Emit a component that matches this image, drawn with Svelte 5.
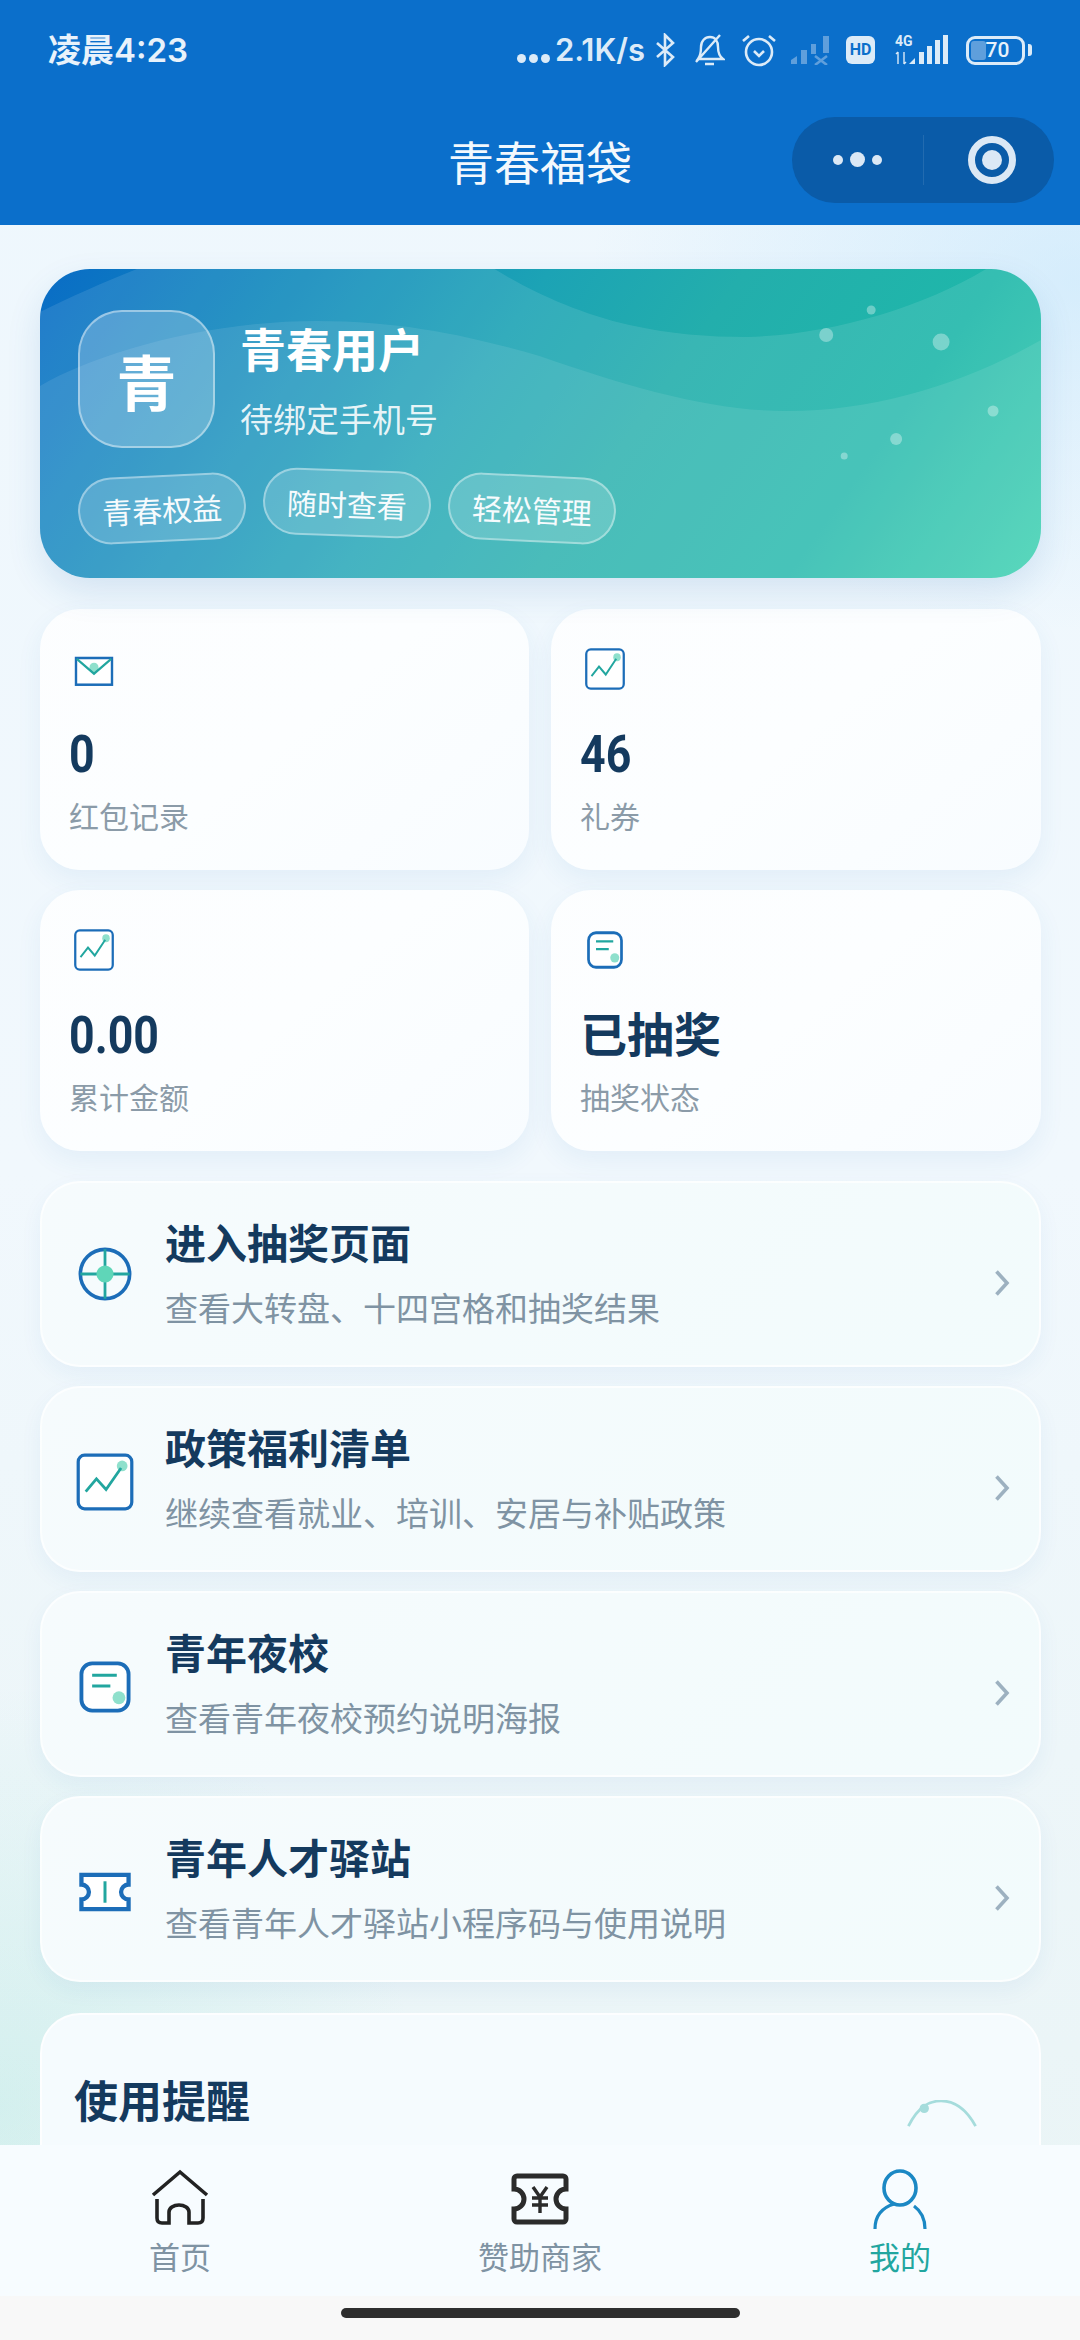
<script>
  const stats = [
    { icon: 'mail', value: '0', label: '红包记录' },
    { icon: 'chart', value: '46', label: '礼券' },
    { icon: 'chart', value: '0.00', label: '累计金额' },
    { icon: 'note', value: '已抽奖', label: '抽奖状态', cjk: true }
  ];
  const menu = [
    { icon: 'wheel', title: '进入抽奖页面', sub: '查看大转盘、十四宫格和抽奖结果' },
    { icon: 'chart', title: '政策福利清单', sub: '继续查看就业、培训、安居与补贴政策' },
    { icon: 'note', title: '青年夜校', sub: '查看青年夜校预约说明海报' },
    { icon: 'ticket', title: '青年人才驿站', sub: '查看青年人才驿站小程序码与使用说明' }
  ];
  const dots = [[787, 66, 7], [832, 41, 4.5], [902, 73, 8.5], [954, 142, 5.5], [857, 170, 6], [805, 187, 3.5]];
</script>

{#snippet glyph(name)}
  {#if name === 'mail'}
    <svg viewBox="0 0 56 56" preserveAspectRatio="none" class="glyph"><rect x="4" y="14" width="48" height="34" fill="#fff" stroke="#1c6db8" stroke-width="3.2"/><circle cx="28" cy="26" r="6" fill="#8fe0cc"/><path d="M5 15 L28 34 L51 15" fill="none" stroke="#22a69f" stroke-width="2.8"/></svg>
  {:else if name === 'chart'}
    <svg viewBox="0 0 56 56" preserveAspectRatio="none" class="glyph"><rect x="3" y="3" width="50" height="50" rx="6" fill="#fff" stroke="#1c6db8" stroke-width="3"/><circle cx="44" cy="13" r="5" fill="#8fe0cc"/><path d="M10 37 L20 25 L29 35 L43 15" fill="none" stroke="#22a69f" stroke-width="2.6"/></svg>
  {:else if name === 'note'}
    <svg viewBox="0 0 56 56" preserveAspectRatio="none" class="glyph"><rect x="6" y="6" width="44" height="44" rx="10" fill="#fff" stroke="#1c6db8" stroke-width="3.6"/><path d="M16 17 H39 M16 27 H33" stroke="#22a69f" stroke-width="2.8"/><circle cx="41" cy="38" r="6" fill="#8fe0cc"/></svg>
  {:else if name === 'wheel'}
    <svg viewBox="0 0 56 56" class="glyph"><circle cx="28" cy="28" r="23" fill="none" stroke="#1c6db8" stroke-width="3.4"/><path d="M28 5 V51 M5 28 H51" stroke="#22a69f" stroke-width="2.6"/><circle cx="28" cy="28" r="8" fill="#5fd6b8"/></svg>
  {:else}
    <svg viewBox="0 0 56 56" class="glyph"><path d="M6 12 H50 V21 A7 7 0 0 0 50 35 V44 H6 V35 A7 7 0 0 0 6 21 Z" fill="#fff" stroke="#1c6db8" stroke-width="4"/><path d="M28 18 V38" stroke="#22a69f" stroke-width="2.8"/></svg>
  {/if}
{/snippet}

<div class="phone">
  <header class="top">
    <div class="status">
      <span class="time">凌晨4:23</span>
      <div class="sys">
        <span class="ell"><i></i><i></i><i></i></span>
        <span class="speed">2.1K/s</span>
        <svg class="s-bt" viewBox="0 0 21 34"><path d="M2 10 L18 24 L10 32 V2 L18 10 L2 24" fill="none" stroke="#dcebf8" stroke-width="2.6"/></svg>
        <svg class="s-bell" viewBox="0 0 32 34"><path d="M5 26 C8 22 8 18 8 14 C8 8 12 4 17 4 C22 4 25 8 25 14 C25 19 26 23 30 26 Z M12 31 H21 M3 29 L27 2" fill="none" stroke="#dcebf8" stroke-width="2.4"/></svg>
        <svg class="s-alarm" viewBox="0 0 36 34"><circle cx="18" cy="19" r="13" fill="none" stroke="#dcebf8" stroke-width="2.6"/><path d="M13 18 L18 23 L23 18 M2 8 L8 3 M28 3 L34 8" fill="none" stroke="#dcebf8" stroke-width="2.6"/></svg>
        <svg class="s-sig" viewBox="0 0 40 30" fill="#5f9fdc"><path d="M0 29 V25 L6 21 V29 Z"/><rect x="10" y="15" width="6" height="14"/><rect x="20" y="9" width="5" height="10"/><rect x="32" y="1" width="6" height="17"/><path d="M24 21 L36 30 M36 21 L24 30" stroke="#5f9fdc" stroke-width="2.6"/></svg>
        <span class="hd">HD</span>
        <svg class="s-4g" viewBox="0 -6 54 42"><text x="0" y="11" class="g4">4G</text><path d="M3 29 V17 M1 19 L3 17 M9 17 V29 M9 29 L11 27" stroke="#dcebf8" stroke-width="1.4" fill="none"/><path d="M14 29 L20 23 V29 Z" fill="#dcebf8"/><rect x="24" y="17" width="5" height="12" fill="#dcebf8"/><rect x="32" y="11" width="5" height="18" fill="#dcebf8"/><rect x="40" y="5" width="5" height="24" fill="#dcebf8"/><rect x="48" y="0" width="5" height="29" fill="#dcebf8"/></svg>
        <div class="batt"><span class="fill"></span><span class="num">70</span></div>
        <span class="tip"></span>
      </div>
    </div>
    <div class="nav">
      <span></span>
      <h1>青春福袋</h1>
      <div class="capsule">
        <span class="more"><i></i><b></b><i></i></span>
        <span class="sep"></span>
        <span class="target"><em></em></span>
      </div>
    </div>
  </header>

  <main class="content">
    <section class="hero">
      <svg class="waves" viewBox="0 0 1002 309" preserveAspectRatio="none">
        <path d="M0 43 C30 28 62 14 97 0 H455 C490 22 540 45 590 56 C630 65 670 68 707 68 C790 66 880 40 947 0 H1002 V309 H0 Z" fill="#fff" fill-opacity=".1"/>
        <path d="M0 117 C55 85 165 52 277 52 C370 52 440 70 500 87 C590 118 670 142 747 142 C840 142 930 112 1002 71 V309 H0 Z" fill="#fff" fill-opacity=".09"/>
        {#each dots as d}
          <circle cx={d[0]} cy={d[1]} r={d[2]} fill="#fff" fill-opacity=".34"/>
        {/each}
      </svg>
      <div class="who">
        <div class="avatar">青</div>
        <div class="info">
          <div class="name">青春用户</div>
          <div class="phoneno">待绑定手机号</div>
        </div>
      </div>
      <div class="tags">
        <span class="tag t1">青春权益</span>
        <span class="tag t2">随时查看</span>
        <span class="tag t3">轻松管理</span>
      </div>
    </section>

    <section class="stats">
      {#each stats as s}
        <div class="stat">
          <div class="stat-icon">{@render glyph(s.icon)}</div>
          <div class="val" class:cjk={s.cjk}>{s.value}</div>
          <div class="lab">{s.label}</div>
        </div>
      {/each}
    </section>

    <section class="menu">
      {#each menu as m}
        <div class="row">
          <div class="row-icon {m.icon}">{@render glyph(m.icon)}</div>
          <div class="row-text">
            <div class="row-title">{m.title}</div>
            <div class="row-sub">{m.sub}</div>
          </div>
          <svg class="chev" viewBox="0 0 16 28"><path d="M2.5 2.5 L13 14 L2.5 25.5" fill="none" stroke="#9db1c0" stroke-width="3.6"/></svg>
        </div>
      {/each}
    </section>

    <section class="tips">
      <h2>使用提醒</h2>
      <svg class="arc" viewBox="0 0 74 30"><path d="M1 28 C12 6 24 1 36 1 C50 1 62 8 73 28" fill="none" stroke="#a5dcdc" stroke-width="3"/><circle cx="18" cy="9" r="5" fill="#a5dcdc"/></svg>
    </section>
  </main>

  <nav class="tabbar">
    <div class="tab">
      <svg viewBox="0 0 60 60" class="ti"><path d="M3 26 L30 3 L57 26" fill="none" stroke="#222" stroke-width="3.6"/><path d="M7 30 V49 q0 5 5 5 H19 V43 a10 7 0 0 1 20 0 V54 H48 q5 0 5 -5 V30" fill="none" stroke="#222" stroke-width="3.6"/></svg>
      <span>首页</span>
    </div>
    <div class="tab">
      <svg viewBox="0 0 60 60" class="ti"><path d="M7 7 H53 a3 3 0 0 1 3 3 V20 a10 10 0 0 0 0 20 V50 a3 3 0 0 1 -3 3 H7 a3 3 0 0 1 -3 -3 V40 a10 10 0 0 0 0 -20 V10 a3 3 0 0 1 3 -3 Z" fill="none" stroke="#2b2b2b" stroke-width="5"/><path d="M23 18 L30 28 L37 18 M22 29 H38 M22 36 H38 M30 28 V44" fill="none" stroke="#2b2b2b" stroke-width="3.4"/></svg>
      <span>赞助商家</span>
    </div>
    <div class="tab on">
      <svg viewBox="0 0 60 60" class="ti"><ellipse cx="30" cy="19" rx="16" ry="17" fill="none" stroke="#1b88c4" stroke-width="3.6"/><path d="M24 35 C11 39 5 48 5 60 M44 37 C51 42 55 50 55 60" fill="none" stroke="#1b88c4" stroke-width="3.2"/></svg>
      <span>我的</span>
    </div>
  </nav>
  <div class="home-bar"><span></span></div>
</div>

<style>
  :global(body) { margin: 0; background: #f8f8f8; }
  .phone {
    position: relative;
    width: 1080px;
    height: 2340px;
    overflow: hidden;
    font-family: Roboto, "Noto Sans CJK SC", sans-serif;
    background:
      radial-gradient(600px 600px at 0% 90%, rgba(120, 220, 205, .2), transparent 70%),
      radial-gradient(700px 500px at 100% 12%, rgba(160, 215, 250, .32), transparent 70%),
      linear-gradient(180deg, #eef7fd 0%, #f1f8fd 50%, #e9f4f5 100%);
  }
  .top { height: 225px; background: #0b6fcb; color: #fff; display: flex; flex-direction: column; }
  .status { height: 100px; display: flex; justify-content: space-between; padding: 0 48px; box-sizing: border-box; }
  .time { font-family: Inter, "Noto Sans CJK SC", sans-serif; font-weight: 600; font-size: 33px; line-height: 100px; color: #e8f2fb; }
  .sys { display: flex; align-items: center; flex: 0 0 auto; color: #dcebf8; }
  .ell { display: flex; gap: 3px; margin-top: 16px; margin-right: 5px; }
  .ell i { width: 9px; height: 9px; border-radius: 50%; background: #dcebf8; display: block; }
  .speed { flex: none; font-family: Inter, sans-serif; font-weight: 600; font-size: 31px; line-height: 44px; white-space: nowrap; }
  .s-bt { width: 21px; height: 34px; margin-left: 10px; }
  .s-bell { width: 32px; height: 34px; margin-left: 17px; }
  .s-alarm { width: 36px; height: 34px; margin-left: 16px; }
  .s-sig { width: 40px; height: 30px; margin-left: 14px; }
  .hd { width: 29px; height: 28px; margin-left: 15px; border-radius: 6px; background: #dcebf8; color: #0b6fcb; font: 700 16px/28px Roboto, sans-serif; text-align: center; }
  .s-4g { width: 54px; height: 42px; margin-left: 20px; }
  .g4 { font: 700 14px Roboto, sans-serif; fill: #dcebf8; }
  .batt { position: relative; width: 59px; height: 29px; margin-left: 17px; border: 3.5px solid #dcebf8; border-radius: 9px; box-sizing: border-box; display: flex; align-items: center; justify-content: center; }
  .fill { position: absolute; left: 2px; top: 2px; bottom: 2px; width: 15px; background: #5f9fdc; border-radius: 3px; }
  .num { position: relative; font: 500 21px Roboto, sans-serif; color: #e8f2fb; margin-left: 4px; }
  .tip { width: 4px; height: 12px; margin-left: 3px; background: #dcebf8; border-radius: 0 3px 3px 0; }

  .nav { flex: 1; display: grid; grid-template-columns: 1fr auto 1fr; align-items: center; padding: 0 26px; margin-top: -6px; }
  h1 { margin: 0; font-size: 46px; font-weight: 400; color: #f2f8fd; }
  .capsule { justify-self: end; width: 262px; height: 86px; border-radius: 43px; background: #0a5ba8; display: flex; align-items: center; }
  .more { width: 131px; display: flex; align-items: center; justify-content: center; gap: 7px; }
  .more i { width: 10px; height: 10px; border-radius: 50%; background: #dbe8f5; }
  .more b { width: 15px; height: 15px; border-radius: 50%; background: #dbe8f5; }
  .sep { width: 1px; height: 50px; background: rgba(255, 255, 255, .1); }
  .target { flex: 1; display: flex; align-items: center; justify-content: center; padding-left: 6px; }
  .target em { width: 48px; height: 48px; box-sizing: border-box; border: 7px solid #dbe8f5; border-radius: 50%; display: flex; align-items: center; justify-content: center; }
  .target em::after { content: ''; width: 20px; height: 20px; border-radius: 50%; background: #dbe8f5; }

  .content { padding: 44px 39px 0 40px; display: flex; flex-direction: column; }
  .hero {
    position: relative;
    height: 309px;
    border-radius: 50px;
    padding: 41px 38px 0;
    box-sizing: border-box;
    overflow: hidden;
    color: #fff;
    background: linear-gradient(125deg, #0a6cc6 0%, #0e86bd 19%, #1ca3b5 42%, #23aeac 58%, #1fb7aa 79%, #36cfae 100%);
    box-shadow: 0 14px 34px rgba(30, 100, 170, .13);
  }
  .waves { position: absolute; inset: 0; width: 100%; height: 100%; }
  .who { position: relative; display: flex; }
  .avatar { width: 137px; height: 138px; box-sizing: border-box; border-radius: 44px; background: rgba(255, 255, 255, .22); border: 2px solid rgba(255, 255, 255, .42); font-size: 60px; font-weight: 700; display: flex; align-items: center; justify-content: center; }
  .info { margin-left: 25px; padding-top: 9px; }
  .name { font-size: 46px; font-weight: 700; line-height: 64px; }
  .phoneno { font-size: 33px; line-height: 46px; margin-top: 15px; color: rgba(255, 255, 255, .88); }
  .tags { position: relative; display: flex; gap: 17px; margin-top: 27px; }
  .tag { width: 168px; height: 67px; box-sizing: border-box; display: flex; align-items: center; justify-content: center; border-radius: 34px; font-size: 30px; background: rgba(255, 255, 255, .16); border: 2px solid rgba(255, 255, 255, .38); color: #f6fbfd; }
  .t1 { transform: rotate(-2.7deg); }
  .t2 { transform: translateY(-5.5px) rotate(2deg); }
  .t3 { transform: rotate(2.7deg); }

  .stats { display: grid; grid-template-columns: 489px 490px; column-gap: 22px; row-gap: 20px; margin-top: 31px; }
  .stat { height: 261px; box-sizing: border-box; padding: 38px 0 0 29px; border-radius: 40px; background: linear-gradient(140deg, rgba(255, 255, 255, .82), #fcfeff 50%, #f8fcff); box-shadow: 0 10px 26px rgba(40, 110, 180, .07); }
  .stat-icon { width: 42px; height: 44px; margin-left: 3.5px; }
  .glyph { display: block; width: 100%; height: 100%; }
  .val { margin-top: 31px; height: 66px; font-size: 52px; font-weight: 700; line-height: 66px; color: #143a5e; transform: scaleX(.86); transform-origin: left center; }
  .val.cjk { font-size: 47px; transform: none; }
  .lab { margin-top: 8px; font-size: 30px; line-height: 44px; color: #8b9ba8; }

  .menu { display: flex; flex-direction: column; gap: 19px; margin-top: 30px; }
  .row { height: 186px; box-sizing: border-box; padding: 0 29px 0 33px; display: flex; align-items: center; border-radius: 40px; background: linear-gradient(135deg, #f6fbfd, #f2fbfc); border: 2px solid rgba(255, 255, 255, .7); box-shadow: 0 8px 22px rgba(40, 110, 180, .06); }
  .row-icon { width: 60px; height: 60px; flex: none; }
  .row-icon.chart, .row-icon.note, .row-icon.ticket { margin-top: 6px; }
  .row-text { flex: 1; margin-left: 30px; }
  .row-title { font-size: 41px; font-weight: 700; line-height: 58px; color: #143a5e; }
  .row-sub { font-size: 33px; line-height: 46px; margin-top: 13px; color: #7f93a3; }
  .chev { width: 16px; height: 28px; flex: none; margin-top: 18px; }

  .tips { position: relative; margin-top: 31px; height: 400px; box-sizing: border-box; padding: 58px 32px; border-radius: 40px; background: #f5fbfe; border: 2px solid rgba(255, 255, 255, .8); }
  h2 { margin: 0; font-size: 44px; font-weight: 700; line-height: 60px; color: #143a5e; }
  .arc { position: absolute; left: 863px; top: 85px; width: 74px; height: 28px; }

  .tabbar { position: absolute; left: 0; right: 0; top: 2145px; height: 151px; background: #f7fcff; display: grid; grid-template-columns: repeat(3, 1fr); }
  .tab { display: flex; flex-direction: column; align-items: center; padding-top: 24px; font-size: 31px; color: #7f93a3; }
  .ti { width: 60px; height: 60px; display: block; }
  .tab span { margin-top: 8px; line-height: 44px; }
  .tab.on span { color: #22a69f; }
  .home-bar { position: absolute; left: 0; right: 0; top: 2296px; height: 44px; background: #f8f8f8; display: flex; justify-content: center; }
  .home-bar span { width: 399px; height: 10px; margin-top: 12px; border-radius: 5px; background: #2e2e2e; }
</style>
